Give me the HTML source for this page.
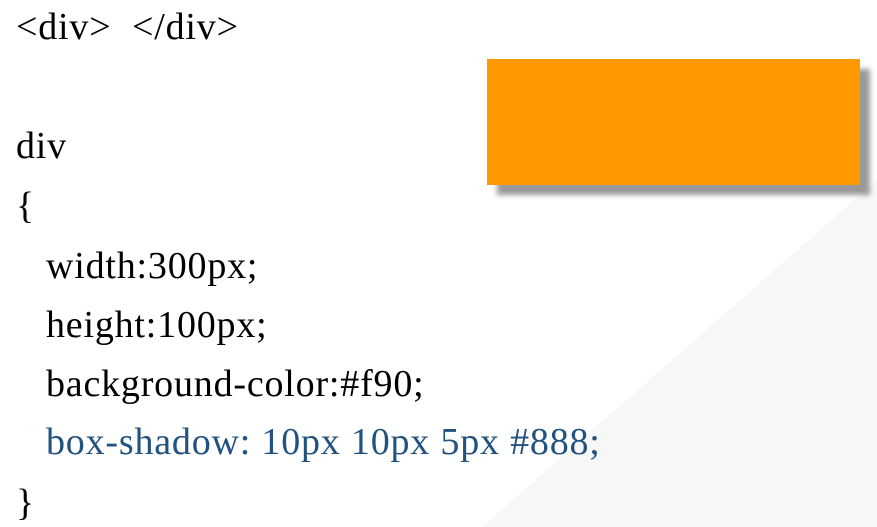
<!DOCTYPE html>
<html><head><meta charset="utf-8"><style>
html,body{margin:0;padding:0;width:877px;height:527px;overflow:hidden;background:#fff;position:relative}
.bg{position:absolute;left:0;top:0;width:877px;height:527px}
.l{position:absolute;font-family:"Liberation Serif",serif;font-size:38px;letter-spacing:0.8px;line-height:58px;color:#000;white-space:pre}
.box{position:absolute;left:487px;top:59px;width:373px;height:126px;background:#f90;box-shadow:10px 10px 5px #999}
</style></head><body>
<svg class="bg" viewBox="0 0 877 527"><polygon points="482,527 877,180 877,527" fill="#f8f7f8"/></svg>
<div class="box"></div>
<div class="l" style="left:16px;top:-2px">&lt;div&gt;  &lt;/div&gt;</div>
<div class="l" style="left:16px;top:117px">div</div>
<div class="l" style="left:16px;top:177px">{</div>
<div class="l" style="left:46px;top:237px">width:300px;</div>
<div class="l" style="left:46px;top:296px">height:100px;</div>
<div class="l" style="left:46px;top:355px">background-color:#f90;</div>
<div class="l" style="left:46px;top:413px;color:#22527f">box-shadow: 10px 10px 5px #888;</div>
<div class="l" style="left:16px;top:474px">}</div>
</body></html>
